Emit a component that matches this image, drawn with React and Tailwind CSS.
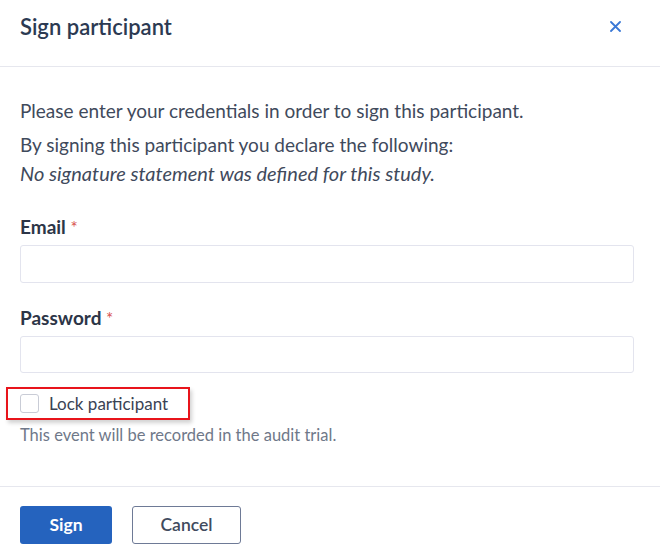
export default function App() {
  return (
    <div className="w-[660px] h-[554px] bg-white overflow-hidden" style={{ fontFamily: "Lato, 'Open Sans', sans-serif" }}>
      <div className="flex items-center justify-between px-5 h-[67px] border-b border-[#e6e7ee] pb-[13px]">
        <h1 className="text-[22px] leading-[28px] font-semibold text-[#2c3a52]">Sign participant</h1>
        <button className="mr-[19px] text-[#3a78d6]">
          <svg width="11" height="11" viewBox="0 0 11 11">
            <path d="M1 1 L10 10 M10 1 L1 10" stroke="currentColor" strokeWidth="1.8" strokeLinecap="round" />
          </svg>
        </button>
      </div>
      <div className="px-5 pt-[30px] h-[420px] border-b border-[#e6e7ee]">
        <p className="text-[19px] leading-[28px] text-[#3f4a5c] mb-[6px] whitespace-nowrap">Please enter your credentials in order to sign this participant.</p>
        <p className="text-[19px] leading-[28px] text-[#3f4a5c] whitespace-nowrap">By signing this participant you declare the following:</p>
        <p className="text-[20px] leading-[28px] text-[#3f4a5c] italic whitespace-nowrap">No signature statement was defined for this study.</p>

        <div className="mt-[28px]">
          <label className="block text-[19px] leading-[24px] font-bold text-[#2c3547]">
            Email <span className="text-[#d9534f] font-normal text-[17px] leading-none">*</span>
          </label>
          <input className="mt-[6px] block w-[614px] h-[38px] rounded-[3px] border border-[#e3e4ee] bg-white" />
        </div>

        <div className="mt-[23px]">
          <label className="block text-[19px] leading-[24px] font-bold text-[#2c3547]">
            Password <span className="text-[#d9534f] font-normal text-[17px] leading-none">*</span>
          </label>
          <input type="password" className="mt-[6px] block w-[614px] h-[37px] rounded-[3px] border border-[#e3e4ee] bg-white" />
        </div>

        <label className="mt-[14px] -ml-[14px] flex items-center w-[184px] h-[33px] border-2 border-[#e8141b] pl-[12px] shadow-[2px_3px_4px_rgba(0,0,0,0.18)]">
          <span className="block w-[19px] h-[19px] rounded-[3px] border border-[#c9ccd6] bg-white" />
          <span className="ml-[10px] text-[17px] leading-[20px] text-[#3a4354] whitespace-nowrap">Lock participant</span>
        </label>
        <p className="mt-[5px] text-[16.5px] leading-[20px] text-[#6f7889] whitespace-nowrap">This event will be recorded in the audit trial.</p>
      </div>
      <div className="flex gap-5 px-5 pt-[19px]">
        <button className="w-[92px] h-[38px] rounded-[3px] bg-[#2563be] text-white text-[17.5px] font-bold">Sign</button>
        <button className="w-[109px] h-[38px] rounded-[3px] border border-[#6e7a96] bg-white text-[#414b5e] text-[17.5px] font-semibold">Cancel</button>
      </div>
    </div>
  );
}
